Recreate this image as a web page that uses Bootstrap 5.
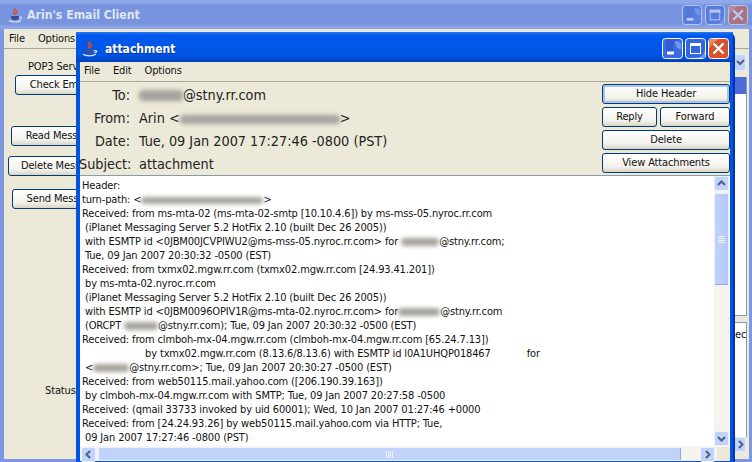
<!DOCTYPE html>
<html>
<head>
<title>Arin's Email Client</title>
<link href="https://cdn.jsdelivr.net/npm/bootstrap@5.3.3/dist/css/bootstrap.min.css" rel="stylesheet">
<style>
html, body { margin: 0; height: 462px; overflow: hidden; background: #f2f2f2; }
body { font-family: "DejaVu Sans Condensed", "Noto Sans", sans-serif; font-size: 11px; letter-spacing: -.14px; color: #111; }
.desk { position: relative; width: 752px; height: 462px; overflow: hidden; }

.win-back { position: absolute; left: 0; top: 0; width: 752px; height: 462px; background: #7c97df; border-radius: 7px 7px 0 0; padding: 0 3px 3px 4px; }
.bar-back { height: 29px; margin: 0 -3px 0 -4px; padding: 0 4px 0 8px; background: linear-gradient(#8ea9ea 0, #8ea9ea 3px, #7994de 5px, #7994de 24px, #8ca6e8 27px); color: #dfe6f8; font-weight: 700; font-size: 12.2px; letter-spacing: 0; }
.bar-back .win-btns { gap: 3px; }
.body-back { height: 430px; background: #ece9d8; }
.menu-row { height: 20px; gap: 13px; padding-left: 5px; background: #ece9d8; border-bottom: 1px solid #aca899; }
.menu-back { padding-top: 2px; }
.left-col { width: 731px; position: relative; flex: none; }
.right-col { flex: 1; padding: 5px 2px 0 0; }
.pop-label { margin: 10px 0 0 24px; line-height: 16px; }

.xp-btn { display: block; height: 20px; padding: 0; font-size: 11px; line-height: 18px; letter-spacing: -.14px; color: #111; background: linear-gradient(#fff, #f3f2ec 70%, #d8d5c6); border: 1px solid #003c74; border-radius: 3px; white-space: nowrap; }
.xp-btn:hover { color: #111; background: #f3f2ec; border-color: #003c74; }
.go-check { width: 89px; margin: 0 0 0 11px; }
.go-read { width: 104px; margin: 31px 0 0 7px; }
.go-del { width: 108px; margin: 10px 0 0 4px; }
.go-send { width: 104px; margin: 13px 0 0 8px; }
.status-label { margin: 174px 0 0 41px; }

.combo-stub { height: 17px; width: 11px; margin-bottom: 6px; background: #c1d3fb; border: 1px solid #e6ecfb; border-left: 0; }
.sel-stub { height: 17px; background: #4d6bd8; border-right: 1px solid #7f9db9; }
.list-stub { height: 222px; background: #fff; border-bottom: 1px solid #7f9db9; border-right: 1px solid #7f9db9; }
.text-stub { height: 115px; margin-top: 6px; background: #fff; border-top: 1px solid #7f9db9; border-right: 1px solid #7f9db9; line-height: 24px; overflow: hidden; }
.arrow-stub { height: 15px; width: 11px; background: #c1d3fb; border: 1px solid #e6ecfb; border-left: 0; }

.win-front { position: absolute; left: 76px; top: 32px; width: 659px; height: 432px; background: #0054e3; border-radius: 7px 7px 0 0; border-right: 2px solid #0831b9; padding: 0 3px 0 4px; }
.bar-front { height: 30px; margin: 0 -3px 0 -4px; padding: 3px 4px 0 6px; background: linear-gradient(#2b7af0 0, #0058ee 3px, #0055e5 22px, #0048cc 28px, #003fb5); color: #fff; font-weight: 700; font-size: 12px; letter-spacing: 0; }
.bar-front .win-title { margin-left: 6px; padding-top: 1px; text-shadow: 1px 1px 0 #0a2f9a; }
.bar-back .win-title { margin-left: 3px; padding-top: 2px; }
.win-btns { margin-left: auto; gap: 2px; }

.head-panel { height: 94px; background: #ece9d8; border-bottom: 1px solid #8a9aa8; padding: 2px 0 0 0; }
.head-grid { display: grid; grid-template-columns: 50px auto; column-gap: 9px; align-content: start; flex: 1; font-size: 14.3px; letter-spacing: 0; line-height: 23px; color: #222; }
.head-grid .lbl { text-align: right; margin-left: -1px; white-space: nowrap; }
.head-btns { width: 128px; gap: 3px; }
.btn-focus { box-shadow: inset 0 0 0 2px #a9c3ee; }
.btn-reply { width: 55px; }
.btn-fwd { width: 70px; }

.msg-area { height: 270px; background: #fff; }
.msg-text { flex: 1; margin: 0; padding: 3px 0 0 2px; overflow: hidden; font-family: "DejaVu Sans Condensed", "Noto Sans", sans-serif; font-size: 11px; letter-spacing: -.14px; line-height: 14px; color: #111; white-space: pre; }
.smudge { display: inline-block; height: 8px; vertical-align: -1px; background: #a5a39c; border-radius: 4px; filter: blur(2px); }
.sm-to { width: 44px; height: 11px; }
.sm-from { width: 160px; height: 9px; }
.sm-path { width: 122px; height: 7px; }
.sm-a { width: 38px; }
.sm-b { width: 42px; }
.sm-c { width: 34px; }
.sm-d { width: 36px; }

.vscroll { width: 15px; margin-right: 1px; background: #f4f3ee; }
.sc-btn { flex: none; width: 15px; height: 15px; background: #c1d3fb; border: 1px solid #eaf0fe; border-radius: 2px; }
.v-thumb { height: 92px; margin-top: 2px; background: linear-gradient(90deg, #c1d3fb, #b4c8f8); border: 1px solid #eaf0fe; border-bottom-color: #8fa8e0; border-radius: 2px; }
.hscroll { height: 15px; background: #f4f3ee; padding-left: 1px; gap: 2px; border-top: 1px solid #f8f7f2; }
.h-thumb { width: 583px; background: #c1d3fb; border: 1px solid #eaf0fe; border-right-color: #8fa8e0; border-radius: 2px; }
.h-gap { width: 15px; }
.h-corner { background: #ece9d8; }
</style>
</head>
<body>
<svg width="0" height="0" class="d-block">
  <defs>
    <symbol id="java-cup" viewBox="0 0 16 16">
      <path d="M7 1c1 2-2 3-1 5 .4.8 1 1.2 1 2M9 3c.6 1.5-1.4 2-.6 4" fill="none" stroke="#e04a1c" stroke-width="1.5"/>
      <path d="M3 9h8v1.6c0 1.6-1.4 2.4-4 2.4s-4-.8-4-2.4z" fill="#3a4f9a"/>
      <path d="M11 10h2c1.4 0 1.2 2-1.5 2" fill="none" stroke="#dfe6fb" stroke-width="1"/>
      <path d="M1 13.5c3 2 9 2 12 0" fill="none" stroke="#dfe6fb" stroke-width="1.2"/>
    </symbol>
    <symbol id="xp-min" viewBox="0 0 21 21">
      <rect x=".5" y=".5" width="20" height="20" rx="3" fill="#3c6ae0" stroke="#fff"/>
      <path d="M4 1h13c-4 2-6 5-6 9s1 6 3 7H4z" fill="#2a58cc" opacity=".7"/>
      <path d="M13 3c3 0 5 1 6 3v5c-3 0-6-2-6-8z" fill="#6f97f0"/>
      <rect x="5" y="13.5" width="7" height="3" fill="#fff"/>
    </symbol>
    <symbol id="xp-max" viewBox="0 0 21 21">
      <rect x=".5" y=".5" width="20" height="20" rx="3" fill="#3466e2" stroke="#fff"/>
      <path d="M10 20c6 0 10-4 10-9v9z" fill="#6f97f0"/>
      <rect x="5.5" y="5.5" width="10" height="10" fill="none" stroke="#fff"/>
      <rect x="5" y="5" width="11" height="3" fill="#fff"/>
    </symbol>
    <symbol id="xp-close" viewBox="0 0 21 21">
      <rect x=".5" y=".5" width="20" height="20" rx="3" fill="#d9532a" stroke="#fff"/>
      <path d="M1 1h10C7 3 3 6 1 11z" fill="#ea8a64"/>
      <path d="M5.5 5.5l10 10M15.5 5.5l-10 10" stroke="#fff" stroke-width="2.4"/>
    </symbol>
  </defs>
</svg>

<div class="desk">
  <div class="win-back">
    <div class="bar-back d-flex align-items-center">
      <svg width="16" height="16"><use href="#java-cup"/></svg>
      <span class="win-title">Arin's Email Client</span>
      <div class="win-btns d-flex opacity-50">
        <svg width="20" height="20"><use href="#xp-min"/></svg>
        <svg width="20" height="20"><use href="#xp-max"/></svg>
        <svg width="20" height="20"><use href="#xp-close"/></svg>
      </div>
    </div>
    <div class="body-back d-flex flex-column">
      <div class="menu-row menu-back d-flex align-items-center"><span>File</span><span>Options</span></div>
      <div class="d-flex flex-grow-1">
        <div class="left-col">
          <div class="pop-label">POP3 Server</div>
          <a class="btn xp-btn go-check">Check Email</a>
          <a class="btn xp-btn go-read">Read Messages</a>
          <a class="btn xp-btn go-del">Delete Messages</a>
          <a class="btn xp-btn go-send">Send Messages</a>
          <div class="status-label">Status</div>
        </div>
        <div class="right-col">
          <div class="combo-stub d-flex align-items-center justify-content-center"><svg width="9" height="7"><path d="M1 2l3 3 4-4" fill="none" stroke="#4d6185" stroke-width="2"/></svg></div>
          <div class="sel-stub"></div>
          <div class="list-stub"></div>
          <div class="text-stub">ec</div>
          <div class="arrow-stub d-flex align-items-center justify-content-center"><svg width="7" height="9"><path d="M2 1l3.5 3.5L2 8" fill="none" stroke="#4d6185" stroke-width="2"/></svg></div>
        </div>
      </div>
    </div>
  </div>

  <div class="win-front d-flex flex-column">
    <div class="bar-front d-flex align-items-center">
      <svg width="17" height="17"><use href="#java-cup"/></svg>
      <span class="win-title">attachment</span>
      <div class="win-btns d-flex">
        <svg width="21" height="21"><use href="#xp-min"/></svg>
        <svg width="21" height="21"><use href="#xp-max"/></svg>
        <svg width="21" height="21"><use href="#xp-close"/></svg>
      </div>
    </div>
    <div class="menu-row d-flex align-items-center ps-1"><span>File</span><span>Edit</span><span>Options</span></div>
    <div class="head-panel d-flex">
      <div class="head-grid">
        <span class="lbl">To:</span><span><span class="smudge sm-to"></span>@stny.rr.com</span>
        <span class="lbl">From:</span><span>Arin &lt;<span class="smudge sm-from"></span>&gt;</span>
        <span class="lbl">Date:</span><span>Tue, 09 Jan 2007 17:27:46 -0800 (PST)</span>
        <span class="lbl">Subject:</span><span>attachment</span>
      </div>
      <div class="head-btns d-flex flex-column">
        <a class="btn xp-btn btn-focus">Hide Header</a>
        <div class="d-flex justify-content-between">
          <a class="btn xp-btn btn-reply">Reply</a>
          <a class="btn xp-btn btn-fwd">Forward</a>
        </div>
        <a class="btn xp-btn">Delete</a>
        <a class="btn xp-btn">View Attachments</a>
      </div>
    </div>
    <div class="msg-area d-flex">
<pre class="msg-text">Header:
turn-path: &lt;<span class="smudge sm-path"></span>&gt;
Received: from ms-mta-02 (ms-mta-02-smtp [10.10.4.6]) by ms-mss-05.nyroc.rr.com
 (iPlanet Messaging Server 5.2 HotFix 2.10 (built Dec 26 2005))
 with ESMTP id &lt;0JBM00JCVPIWU2@ms-mss-05.nyroc.rr.com&gt; for <span class="smudge sm-a"></span>@stny.rr.com;
 Tue, 09 Jan 2007 20:30:32 -0500 (EST)
Received: from txmx02.mgw.rr.com (txmx02.mgw.rr.com [24.93.41.201])
 by ms-mta-02.nyroc.rr.com
 (iPlanet Messaging Server 5.2 HotFix 2.10 (built Dec 26 2005))
 with ESMTP id &lt;0JBM0096OPIV1R@ms-mta-02.nyroc.rr.com&gt; for<span class="smudge sm-b"></span>@stny.rr.com
 (ORCPT <span class="smudge sm-c"></span>@stny.rr.com); Tue, 09 Jan 2007 20:30:32 -0500 (EST)
Received: from clmboh-mx-04.mgw.rr.com (clmboh-mx-04.mgw.rr.com [65.24.7.13])
                     by txmx02.mgw.rr.com (8.13.6/8.13.6) with ESMTP id l0A1UHQP018467            for
 &lt;<span class="smudge sm-d"></span>@stny.rr.com&gt;; Tue, 09 Jan 2007 20:30:27 -0500 (EST)
Received: from web50115.mail.yahoo.com ([206.190.39.163])
 by clmboh-mx-04.mgw.rr.com with SMTP; Tue, 09 Jan 2007 20:27:58 -0500
Received: (qmail 33733 invoked by uid 60001); Wed, 10 Jan 2007 01:27:46 +0000
Received: from [24.24.93.26] by web50115.mail.yahoo.com via HTTP; Tue,
 09 Jan 2007 17:27:46 -0800 (PST)</pre>
      <div class="vscroll d-flex flex-column">
        <div class="sc-btn d-flex align-items-center justify-content-center"><svg width="9" height="7"><path d="M1 5l3.5-3.5L8 5" fill="none" stroke="#4d6185" stroke-width="2"/></svg></div>
        <div class="v-thumb d-flex flex-column align-items-center justify-content-center"><svg width="7" height="7"><path d="M0 .5h7M0 2.5h7M0 4.5h7M0 6.5h7" stroke="#eef3fe"/></svg></div>
        <div class="flex-grow-1"></div>
        <div class="sc-btn d-flex align-items-center justify-content-center"><svg width="9" height="7"><path d="M1 2l3.5 3.5L8 2" fill="none" stroke="#4d6185" stroke-width="2"/></svg></div>
      </div>
    </div>
    <div class="hscroll d-flex">
      <div class="sc-btn d-flex align-items-center justify-content-center"><svg width="7" height="9"><path d="M5 1L1.5 4.5 5 8" fill="none" stroke="#4d6185" stroke-width="2"/></svg></div>
      <div class="h-thumb d-flex align-items-center justify-content-center"><svg width="7" height="7"><path d="M.5 0v7M2.5 0v7M4.5 0v7M6.5 0v7" stroke="#eef3fe"/></svg></div>
      <div class="h-gap"></div>
      <div class="sc-btn d-flex align-items-center justify-content-center"><svg width="7" height="9"><path d="M2 1l3.5 3.5L2 8" fill="none" stroke="#4d6185" stroke-width="2"/></svg></div>
      <div class="h-corner flex-grow-1"></div>
    </div>
  </div>
</div>
<script src="https://cdn.jsdelivr.net/npm/bootstrap@5.3.3/dist/js/bootstrap.bundle.min.js"></script>
</body>
</html>
